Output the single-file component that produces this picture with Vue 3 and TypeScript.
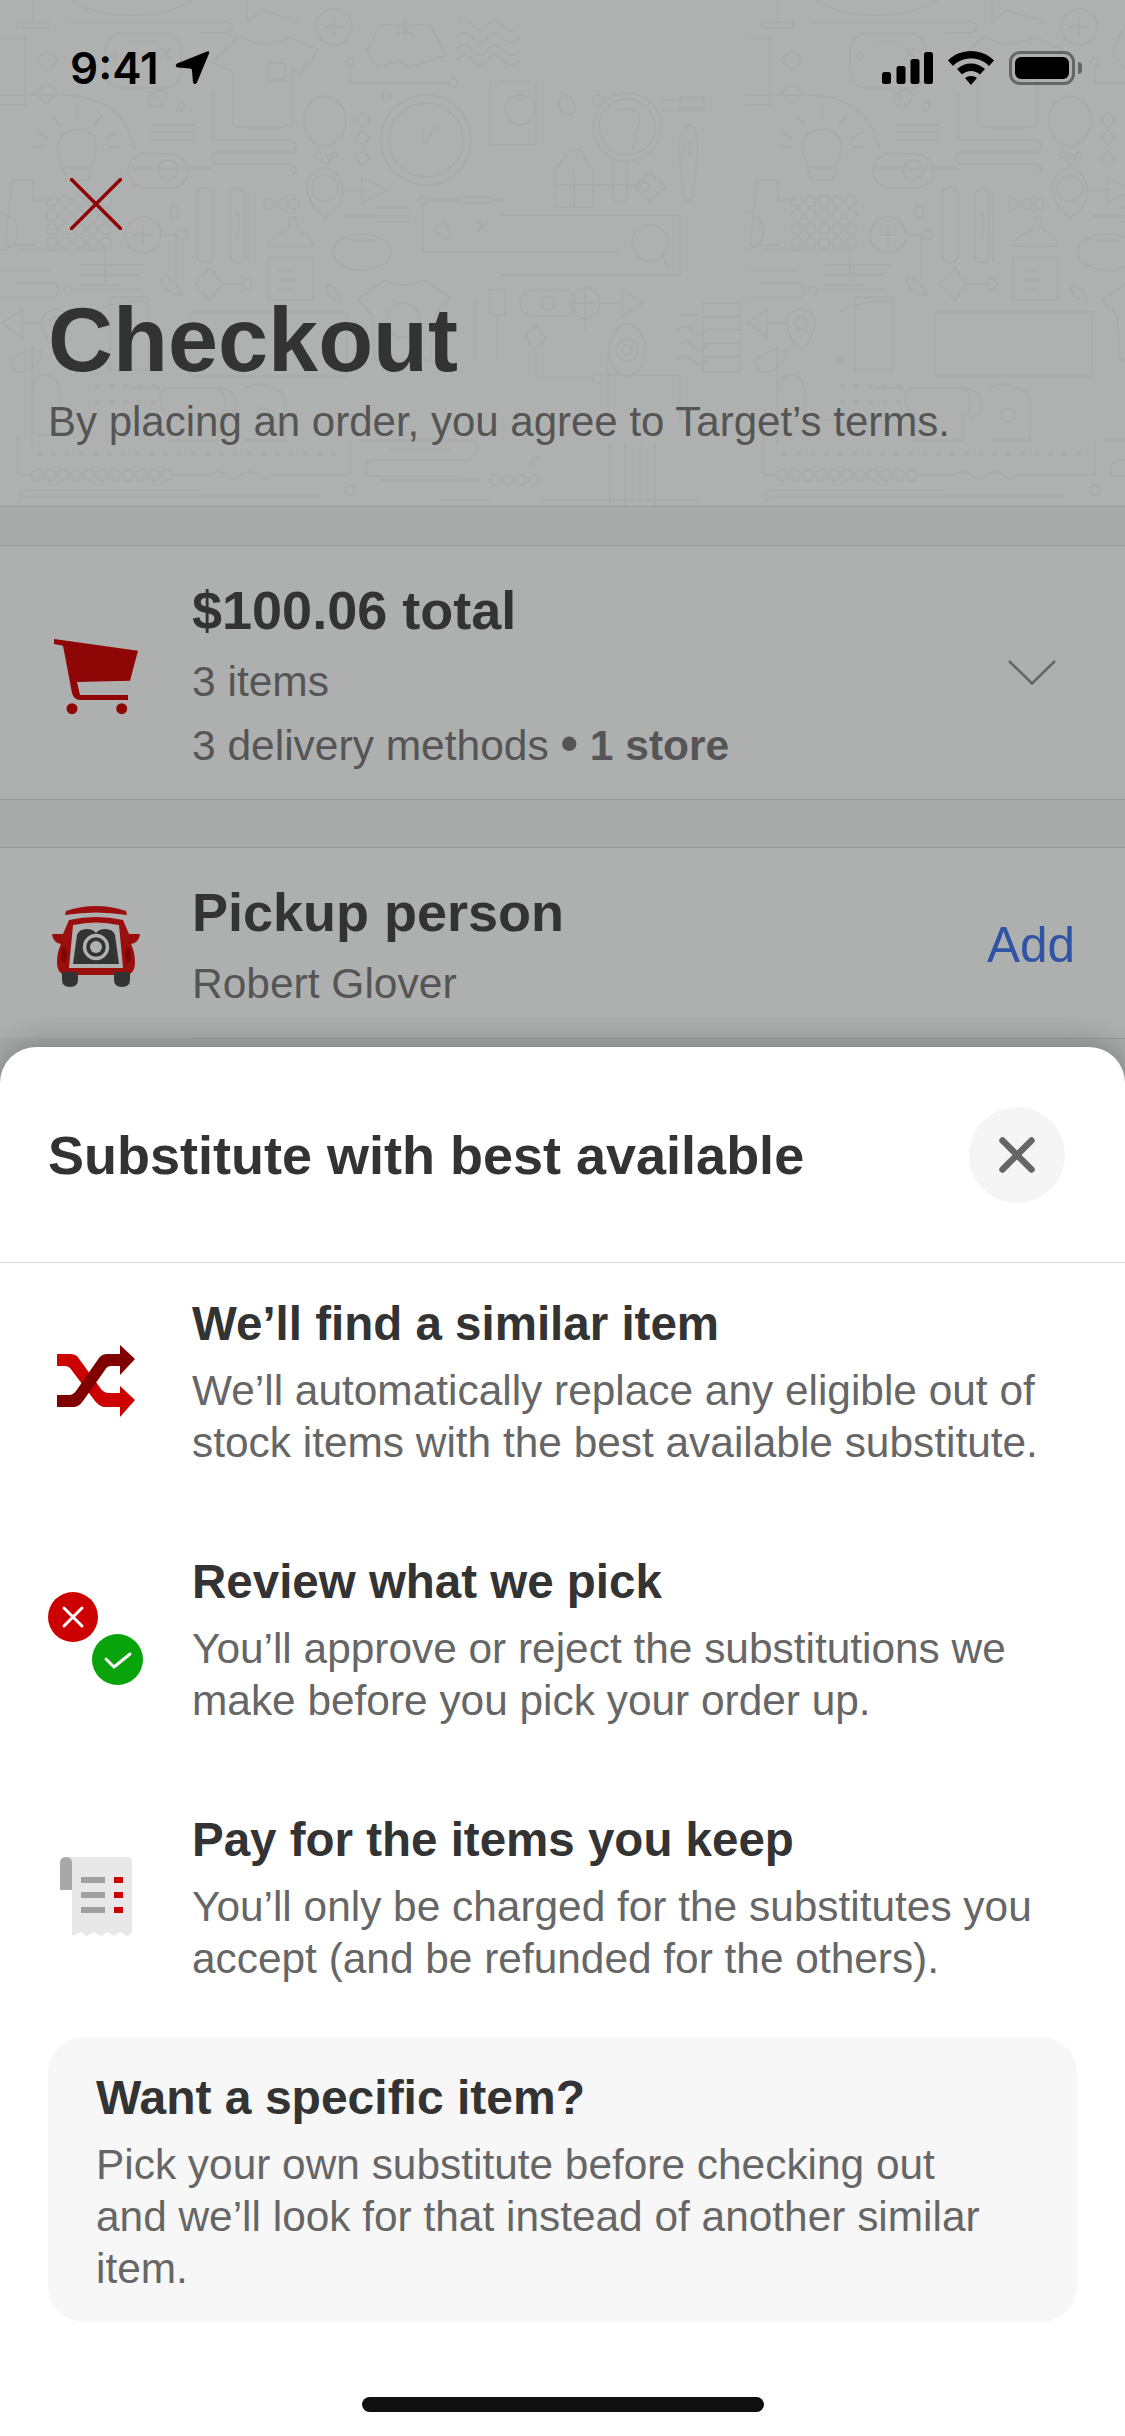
<template>
  <div class="page">
    <header class="head">
      <svg class="pattern" width="1125" height="507" viewBox="0 0 1125 507" aria-hidden="true">
        <defs>
          <g id="tile" fill="none" stroke="#aaacab" stroke-width="1.800">
            <!-- top row -->
            <path d="M33 0V22M17 22H48V28H17Z" />
            <path d="M72 0Q90 15 130 15T193 0M65 22H225Q232 22 232 27T225 33H200" />
            <path d="M247 22V0M247 22L262 10L300 22" />
            <circle cx="334" cy="27" r="18" /><path d="M334 17V37M324 27H344" />
            <path d="M380 25H430L447 55L410 68L398 60L378 68L367 50ZM405 18V42M395 24L415 36M415 24L395 36" />
            <path d="M457 25Q464 15 472 25T487 25T502 25T520 25M457 38Q464 28 472 38T487 38T502 38T520 38M457 50Q464 40 472 50T487 50T502 50T520 50M457 60Q464 50 472 60T487 60T502 60T520 60" />
            <rect x="105" y="34" width="76" height="54" rx="16" /><path d="M115 50V62M109 56H121M160 48L170 58M170 48L160 58M128 42H158" />
            <path d="M0 38H25V105H0M47 50L58 60L47 71L36 60ZM47 83L58 93L47 104L36 93Z" />
            <path d="M0 95H70Q125 100 135 150" />
            <path d="M240 37Q265 50 290 37L318 50L300 75L292 68V125Q265 132 233 125V72L212 62L238 37" />
            <rect x="268" y="63" width="17" height="17" />
            <circle cx="350" cy="62" r="4" /><path d="M350 66V83H383" /><circle cx="387" cy="96" r="4" /><path d="M350 83H450" /><circle cx="453" cy="83" r="4" />
            <!-- second row -->
            <path d="M77 130Q100 130 95 155L88 180H66L59 155Q54 130 77 130ZM66 168H88M77 105V122M52 115L60 126M102 115L94 126M36 132L48 138M118 132L106 138M33 147H46M108 147H121" />
            <path d="M150 125H195M150 132H195M150 140H195" />
            <path d="M155 98Q152 92 160 90Q170 92 166 100Q158 112 150 104Q145 96 155 92M183 100Q187 110 178 112Q176 105 183 100" />
            <path d="M213 92V140H290Q296 140 296 146T290 152H218Q212 152 212 158T218 164H290Q296 164 296 170T290 170M130 168H212" />
            <circle cx="168" cy="170" r="10" /><rect x="128" y="154" width="60" height="34" rx="17" />
            <path d="M325 96Q346 100 346 122Q344 140 325 148Q304 140 304 122Q304 100 325 96Z" />
            <path d="M363 112L370 120L363 128L356 120ZM363 130L370 138L363 146L356 138ZM363 150L370 158L363 166L356 158Z" />
            <circle cx="318" cy="155" r="3" /><circle cx="326" cy="160" r="4" /><circle cx="334" cy="155" r="3" />
            <circle cx="426" cy="140" r="45" /><circle cx="426" cy="140" r="37" /><path d="M424 145L422 128M424 145L440 122" />
            <path d="M500 82H530M490 82V145H536V82M505 110A15 15 0 1 0 535 110A15 15 0 1 0 505 110" />
            <path d="M566 95Q575 100 575 110Q570 118 562 112Q555 100 566 95ZM593 100A5 5 0 1 0 603 100A5 5 0 1 0 593 100" />
            <circle cx="627" cy="127" r="34" /><circle cx="627" cy="127" r="28" /><path d="M627 161V195Q627 202 620 202T613 195V162M615 110Q640 105 640 120L632 150" />
            <path d="M555 170L570 150H580L593 170V207H555ZM574 170V207M555 185H640" />
            <path d="M660 100H705M660 110H705M680 97H704V108H680Z" />
            <path d="M690 125Q700 130 697 160L692 200H684L680 160Q676 130 690 125ZM684 140V155M690 140V155" />
            <circle cx="645" cy="187" r="4" /><path d="M650 172L665 187L650 202L635 187Z" />
            <!-- third row -->
            <path d="M197 195A8 8 0 0 1 213 195V255Q213 262 205 262T197 255ZM230 195A7 7 0 0 1 244 195V255Q244 262 237 262T230 255ZM236 210Q242 220 236 240M248 192V262" />
            <circle cx="143" cy="235" r="18" /><path d="M143 225V245M133 235H153M161 235H176V280" /><circle cx="182" cy="235" r="5" />
            <g v-for="d in dots" :key="d.k"><circle :cx="d.x" :cy="d.y" r="5.500" /></g>
            <path d="M52 200H33V180H12L5 245H35M20 250H105V282" />
            <path d="M0 213A18 18 0 0 1 18 232A18 18 0 0 1 0 250" />
            <path d="M172 205Q182 208 178 216Q170 222 170 212Z" />
            <circle cx="325" cy="188" r="13" /><path d="M325 218Q345 205 342 185Q335 168 325 168Q310 170 307 187Q308 205 325 218ZM342 190H365M362 178L387 190L362 203Z" />
            <circle cx="269" cy="204" r="5" /><circle cx="282" cy="204" r="5" /><circle cx="294" cy="204" r="5" />
            <path d="M290 218Q290 230 282 232Q270 238 268 246H313Q312 238 302 232Q296 230 296 218ZM268 258H313V300H268ZM278 270H293M278 280H293M278 290H293" />
            <ellipse cx="362" cy="252" rx="29" ry="18" /><path d="M350 240H374" />
            <path d="M347 216H410M375 208H410M375 222H410" />
            <rect x="457" y="197" width="33" height="6" rx="3" /><circle cx="423" cy="200" r="4" /><path d="M423 204V252H500M423 200H457M490 200H505" />
            <path d="M445 222Q452 230 450 240Q440 238 434 228ZM478 222L488 232M488 222L478 232" />
            <!-- long rectangle -->
            <path d="M500 215H680V275H500M500 252H620" />
            <circle cx="650" cy="243" r="18" /><path d="M662 255L668 268" />
            <path d="M0 270H50M0 298H52Q58 298 58 290T52 283H15" />
            <path d="M80 265H145M80 275H140M80 285H120" />
            <circle cx="68" cy="290" r="4" /><path d="M72 290H140" />
            <path d="M165 275Q178 285 182 295Q170 295 162 285Q160 278 165 275Z" />
            <path d="M210 268L222 284L210 300L195 284ZM222 284H245" /><circle cx="247" cy="284" r="5" />
            <path d="M330 285Q340 292 342 302Q330 300 326 290Q326 285 330 285Z" />
            <!-- fourth row -->
            <path d="M357 300L385 280Q405 290 425 280L450 298L435 315L430 360H375L372 315Z" />
            <circle cx="403" cy="320" r="17" />
            <rect x="190" y="312" width="157" height="64" />
            <path d="M22 310V337L2 323ZM22 323H42M42 323A14 14 0 1 1 70 323Q68 340 56 350Q44 340 42 323Z" />
            <circle cx="56" cy="323" r="6" />
            <path d="M95 310Q140 295 148 305V340M110 297H148V370H110Z" />
            <circle cx="95" cy="360" r="2" />
            <path d="M10 360Q30 345 42 352Q40 368 22 372Q10 372 10 360Z" />
            <path d="M475 300V360M490 290H505V315H490ZM497 315V360" />
            <rect x="520" y="290" width="56" height="26" rx="13" /><circle cx="548" cy="303" r="7" />
            <circle cx="585" cy="303" r="15" /><path d="M585 288V318M570 303H600M585 318V330M600 303H622M622 290L643 303L622 317Z" />
            <path d="M535 325L546 338L535 350L525 338ZM536 350V378H590" /><circle cx="597" cy="378" r="5" />
            <ellipse cx="627" cy="350" rx="18" ry="26" /><circle cx="627" cy="350" r="11" /><circle cx="627" cy="350" r="5" />
            <path d="M608 350V440M608 375H680V420" />
            <path d="M678 315H700M678 330Q686 322 692 330T708 330M678 345Q686 337 692 345T708 345M678 360Q686 352 692 360T708 360" />
            <path d="M703 303H740V372H703ZM703 317H740M703 330H740M703 343H740M703 357H740" />
            <!-- bottom rows -->
            <path d="M32 345V445M45 375Q60 375 60 395V420Q60 435 45 435H37Q30 430 33 395Q33 375 45 375ZM60 420H95" />
            <path d="M170 388H210Q225 388 225 400Q225 415 218 415V440H170V415Q160 410 160 400Q160 388 170 388ZM216 388Q236 388 236 404Q236 415 225 418" />
            <path d="M244 388Q262 380 270 388Q285 388 285 404V440H244" /><circle cx="263" cy="415" r="7" />
            <path d="M130 388H160" />
            <g v-for="s in squares" :key="s.k"><rect :x="s.x" :y="s.y" width="5" height="5" fill="#aaacab" stroke="none" /></g>
            <g v-for="c in rings" :key="c"><circle :cx="c" cy="475" r="5.500" /></g>
            <path d="M18 475H32M18 435V475M172 475H210Q218 468 226 475T242 475T258 475T272 475H350V440" />
            <path d="M20 496Q20 490 30 490H200M20 505Q20 496 30 496H320M360 440H470Q476 440 476 446T470 460H374Q366 460 366 468V476H460" />
            <circle cx="350" cy="490" r="5" /><circle cx="495" cy="480" r="5" /><circle cx="508" cy="480" r="5" /><circle cx="521" cy="480" r="5" /><circle cx="534" cy="480" r="5" />
            <path d="M610 445V507M625 445V507M640 445V507M655 445V507" />
            <path d="M380 480H480M390 450H450M440 500H490" />
            <path d="M530 470Q530 458 540 458M540 500H700" />
          </g>
        </defs>
        <use href="#tile" x="-745" />
        <use href="#tile" x="0" />
        <use href="#tile" x="745" />
      </svg>

      <div class="status">
        <div class="clock">
          <span>9:41</span>
          <svg width="36" height="36" viewBox="0 0 36 36" aria-hidden="true">
            <path d="M33 1.500L3 13.500Q0 16.500 4 17.500L16 18.500Q18 18.500 18 20.500L19 32.500Q21 35.500 23 32.500L35 3.500Q36 .5 33 1.500Z" fill="#000" />
          </svg>
        </div>
        <div class="sys">
          <svg width="51" height="32" viewBox="0 0 51 32" aria-hidden="true">
            <rect x="0" y="20" width="9" height="12" rx="2.500" />
            <rect x="14.500" y="14" width="9" height="18" rx="2.500" />
            <rect x="28.500" y="7" width="9" height="25" rx="2.500" />
            <rect x="42" y="0" width="9" height="32" rx="2.500" />
          </svg>
          <svg width="46" height="34" viewBox="0 0 46 34" aria-hidden="true">
            <path d="M23 0C32 0 40 3.500 46 9.500L41 15C36.500 10 30 7.500 23 7.500S9.500 10 5 15L0 9.500C6 3.500 14 0 23 0Z" />
            <path d="M23 12.500C28.500 12.500 33 14.500 37 18L32 23.500C29.500 21.300 26.500 20 23 20S16.500 21.300 14 23.500L9 18C13 14.500 17.500 12.500 23 12.500Z" />
            <path d="M23 25C25.500 25 27.500 25.800 29 27L23 34L17 27C18.500 25.800 20.500 25 23 25Z" />
          </svg>
          <div class="battery">
            <span class="battery-fill"></span>
            <span class="battery-nub"></span>
          </div>
        </div>
      </div>

      <button type="button" class="dismiss" aria-label="Close">
        <svg width="52" height="52" viewBox="0 0 52 52" aria-hidden="true">
          <path d="M1.500 1.500L50.500 50.500M50.500 1.500L1.500 50.500" stroke="#8e0706" stroke-width="3.500" stroke-linecap="round" />
        </svg>
      </button>
      <h1 class="title">Checkout</h1>
      <p class="terms">By placing an order, you agree to Target’s terms.</p>
    </header>

    <section class="card summary">
      <div class="card-icon">
        <svg width="84" height="76" viewBox="0 0 84 76" aria-hidden="true">
          <path d="M0 0L84 11.700L76 41.700L23 43L26 56H74V61H26Q20 61 18 54L9 6.700L0 5Z" fill="#8e0706" />
          <circle cx="18" cy="69.700" r="5.500" fill="#8e0706" />
          <circle cx="67.700" cy="69.700" r="5.500" fill="#8e0706" />
        </svg>
      </div>
      <div class="card-body">
        <div class="card-title">$100.06 total</div>
        <div class="card-line">3 items</div>
        <div class="card-line">3 delivery methods <b class="dot">•</b> <b>1 store</b></div>
      </div>
      <svg class="chevron" width="48" height="25" viewBox="0 0 48 25" aria-hidden="true">
        <path d="M1 1L24 23.500L47 1" fill="none" stroke="#666" stroke-width="2.500" />
      </svg>
    </section>

    <section class="card pickup">
      <div class="card-icon">
        <svg width="88" height="81" viewBox="0 0 88 81" aria-hidden="true">
          <path d="M14 5Q44 -5 74 5L75 9Q44 4 13 9Z" fill="#9a0e0d" />
          <path d="M17 14Q44 8 71 14L77 28H88Q87 37 79 38Q83 46 83 57Q83 66 76 69H12Q5 66 5 57Q5 46 9 38Q1 37 0 28H11Z" fill="#9a0e0d" />
          <path d="M21 19Q44 14 67 19L71 62H17Z" fill="#afb1b0" />
          <path d="M25 29Q27 23 35 23Q41 23 44 27Q47 23 53 23Q61 23 63 29L67 58H21Z" fill="#333" />
          <circle cx="44" cy="41" r="11.500" fill="none" stroke="#afb1b0" stroke-width="3.500" />
          <circle cx="44" cy="41" r="6" fill="#afb1b0" />
          <path d="M10 66V74Q10 81 18 81T26 74V66ZM62 66V74Q62 81 70 81T78 74V66Z" fill="#333" />
          <ellipse cx="12" cy="49" rx="3" ry="8" fill="#7e0706" />
          <ellipse cx="76" cy="49" rx="3" ry="8" fill="#7e0706" />
        </svg>
      </div>
      <div class="card-body">
        <div class="card-title">Pickup person</div>
        <div class="card-line">Robert Glover</div>
      </div>
      <a class="add">Add</a>
    </section>
    <div class="inset-rule"></div>

    <div class="sheet">
      <div class="sheet-head">
        <h2>Substitute with best available</h2>
        <button type="button" class="sheet-close" aria-label="Close">
          <svg width="36" height="36" viewBox="0 0 36 36" aria-hidden="true">
            <path d="M3.500 3.500L32.500 32.500M32.500 3.500L3.500 32.500" stroke="#666" stroke-width="6.500" stroke-linecap="round" />
          </svg>
        </button>
      </div>
      <ul class="points">
        <li v-for="point in points" :key="point.title" class="point">
          <div class="point-icon">
            <svg v-if="point.icon === 'shuffle'" width="78" height="72" viewBox="0 0 78 72" aria-hidden="true">
              <path d="M0 9H14Q17 9 20 11L44 44Q47 48 52 48H63V41L78 55L63 72V62H48Q43 62 38 56L13 23Q11 21 8 21H0Z" fill="#cc0000" />
              <path d="M0 50H12Q16 50 19 46L42 13Q45 9 50 9H63V0L78 14L63 30V21H54Q50 21 48 25L26 56Q22 62 16 62H0Z" fill="#800000" />
            </svg>
            <svg v-else-if="point.icon === 'review'" width="96" height="94" viewBox="0 0 96 94" aria-hidden="true">
              <circle cx="25" cy="25" r="25" fill="#cc0000" />
              <path d="M16 16L34 34M34 16L16 34" stroke="#fff" stroke-width="3" stroke-linecap="round" />
              <circle cx="69.500" cy="67.500" r="25.500" fill="#09a30b" />
              <path d="M58 67L66 75L82 62" fill="none" stroke="#fff" stroke-width="3" stroke-linecap="round" stroke-linejoin="round" />
            </svg>
            <svg v-else width="72" height="79" viewBox="0 0 72 79" aria-hidden="true">
              <path d="M6 0H68Q72 0 72 4V76L67 79L60 75L54 79L47 75L41 79L34 75L27 79L21 75L12 79V6Z" fill="#e8e8e8" />
              <path d="M0 33V6Q0 0 6 0Q12 0 12 6V33Z" fill="#a8a8a8" />
              <g fill="#a0a0a0"><rect x="21" y="20" width="24" height="6" /><rect x="21" y="35" width="24" height="6" /><rect x="21" y="50" width="24" height="6" /></g>
              <g fill="#cc0000"><rect x="54" y="20" width="9" height="6" /><rect x="54" y="35" width="9" height="6" /><rect x="54" y="50" width="9" height="6" /></g>
            </svg>
          </div>
          <div class="point-body">
            <h3>{{ point.title }}</h3>
            <p v-html="point.text"></p>
          </div>
        </li>
      </ul>
      <aside class="note">
        <h3>Want a specific item?</h3>
        <p>Pick your own substitute before checking out<br />and we’ll look for that instead of another similar<br />item.</p>
      </aside>
      <div class="home-bar"></div>
    </div>
  </div>
</template>

<script setup lang="ts">
type Point = { icon: 'shuffle' | 'review' | 'receipt'; title: string; text: string };

const points: Point[] = [
  {
    icon: 'shuffle',
    title: 'We’ll find a similar item',
    text: 'We’ll automatically replace any eligible out of<br>stock items with the best available substitute.',
  },
  {
    icon: 'review',
    title: 'Review what we pick',
    text: 'You’ll approve or reject the substitutions we<br>make before you pick your order up.',
  },
  {
    icon: 'receipt',
    title: 'Pay for the items you keep',
    text: 'You’ll only be charged for the substitutes you<br>accept (and be refunded for the others).',
  },
];

// background line-art repeats: peg grid, bullet squares, ring row
const dots: { k: string; x: number; y: number }[] = [];
for (let r = 0; r < 4; r++) {
  for (let c = 0; c < 5; c++) {
    dots.push({ k: `${r}-${c}`, x: 52 + c * 13.500, y: 201 + r * 14 });
  }
}
const squares: { k: string; x: number; y: number }[] = [];
for (let r = 0; r < 2; r++) {
  for (let c = 0; c < 5; c++) {
    squares.push({ k: `a${r}-${c}`, x: 95 + c * 14, y: 384 + r * 16 });
  }
}
for (let c = 0; c < 22; c++) {
  squares.push({ k: `b${c}`, x: 37 + c * 14, y: 451 });
}
const rings = [37, 50, 63, 76, 89, 102, 115, 128, 141, 154, 167];
</script>

<style>
html,
body {
  margin: 0;
  background: #fff;
}
</style>

<style scoped>
.page {
  position: relative;
  width: 1125px;
  height: 2436px;
  overflow: hidden;
  background: #a9abaa;
  font-family: "Liberation Sans", Arial, sans-serif;
  color: #333;
}

.head {
  position: relative;
  height: 507px;
  box-sizing: border-box;
  padding: 0 48px;
  background: #afb1b0;
  border-bottom: 1px solid #979998;
  overflow: hidden;
}

.pattern {
  position: absolute;
  left: 0;
  top: 0;
}

.status {
  position: relative;
  display: flex;
  justify-content: space-between;
  align-items: center;
  height: 136px;
  padding: 0 43px 0 22px;
  margin-right: -48px;
}

.clock {
  display: flex;
  align-items: center;
  gap: 15px;
  font-family: Inter, sans-serif;
  font-weight: 600;
  font-size: 44px;
  line-height: 1;
  color: #000;
}

.sys {
  display: flex;
  align-items: center;
  gap: 15px;
}

.battery {
  position: relative;
  box-sizing: border-box;
  width: 66px;
  height: 34px;
  border: 3px solid #666;
  border-radius: 11px;
  margin-right: 7px;
}

.battery-fill {
  position: absolute;
  inset: 3px;
  background: #000;
  border-radius: 6px;
}

.battery-nub {
  position: absolute;
  right: -10px;
  top: 8px;
  width: 4px;
  height: 12px;
  background: #666;
  border-radius: 0 4px 4px 0;
}

.dismiss {
  position: relative;
  display: block;
  padding: 0;
  margin: 42px 0 0 22px;
  border: 0;
  background: none;
  line-height: 0;
}

.title {
  position: relative;
  margin: 60px 0 0;
  font-size: 90px;
  line-height: 100px;
  font-weight: 700;
  color: #333;
}

.terms {
  position: relative;
  margin: 6px 0 0;
  font-size: 42px;
  line-height: 52px;
  color: #555;
}

.card {
  display: flex;
  align-items: center;
  box-sizing: border-box;
  background: #aeb0af;
  border-top: 1px solid #979998;
  padding: 0 50px 0 48px;
}

.summary {
  height: 255px;
  margin-top: 38px;
  padding-top: 7px;
  border-bottom: 1px solid #979998;
}

.summary .card-icon {
  margin-top: 1px;
}

.pickup {
  height: 191px;
  margin-top: 47px;
  padding-top: 7px;
}

.inset-rule {
  height: 1px;
  margin-left: 192px;
  background: #979998;
}

.card-icon {
  flex: none;
  width: 96px;
  margin-right: 48px;
  display: flex;
  justify-content: center;
}

.card-body {
  flex: 1;
}

.card-title {
  margin-bottom: 11px;
  font-size: 54px;
  line-height: 64px;
  font-weight: 700;
  color: #333;
}

.card-line {
  margin-top: 6px;
  font-size: 42.500px;
  line-height: 58px;
  color: #555;
}

.card-line b {
  font-weight: 700;
}

.card-line .dot {
  font-size: 50px;
  line-height: 0;
}

.chevron {
  flex: none;
  margin: 0 19px 7px 0;
}

.add {
  font-size: 49.500px;
  color: #2f54a5;
  margin-bottom: 5px;
}

.sheet {
  position: absolute;
  left: 0;
  right: 0;
  bottom: 0;
  height: 1389px;
  box-sizing: border-box;
  background: #fff;
  border-radius: 36px 36px 0 0;
  box-shadow: 0 -4px 30px rgba(0, 0, 0, 0.25);
}

.sheet-head {
  display: flex;
  align-items: center;
  justify-content: space-between;
  height: 215px;
  padding: 0 60px 0 48px;
  border-bottom: 1px solid #d6d6d6;
}

.sheet-head h2 {
  margin: 0;
  font-size: 54px;
  font-weight: 700;
  color: #333;
}

.sheet-close {
  width: 96px;
  height: 96px;
  padding: 0;
  border: 0;
  border-radius: 50%;
  background: #f5f5f5;
  display: flex;
  align-items: center;
  justify-content: center;
}

.points {
  list-style: none;
  margin: 0;
  padding: 32px 48px 0;
  display: flex;
  flex-direction: column;
  gap: 84px;
}

.point {
  display: flex;
}

.point-icon {
  flex: none;
  width: 96px;
  margin-right: 48px;
  padding-bottom: 3px;
  display: flex;
  align-items: center;
  justify-content: center;
}

.point-body {
  flex: 1;
  min-width: 0;
}

.point h3,
.note h3 {
  margin: 0;
  font-size: 47.500px;
  line-height: 58px;
  font-weight: 700;
  color: #333;
}

.point p,
.note p {
  margin: 12px 0 0;
  font-size: 42.400px;
  line-height: 52px;
  color: #666;
}

.note {
  margin: 52px 48px 0;
  height: 285px;
  box-sizing: border-box;
  padding: 32px 48px 0;
  background: #f7f7f7;
  border-radius: 36px;
}

.note h3 {
  font-size: 48px;
}

.home-bar {
  position: absolute;
  left: 362px;
  bottom: 24px;
  width: 402px;
  height: 15px;
  border-radius: 8px;
  background: #0f0f0f;
}
</style>
